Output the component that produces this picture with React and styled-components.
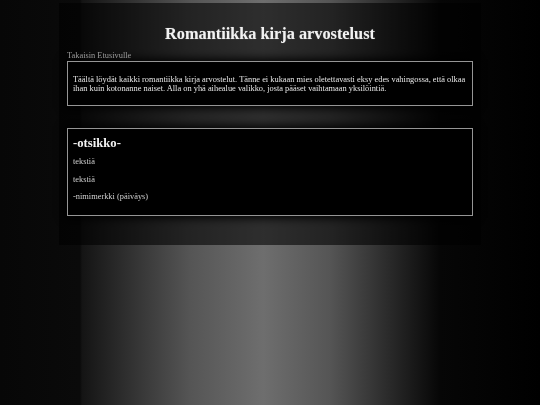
import React from "react";
import styled, { createGlobalStyle } from "styled-components";

const GlobalStyle = createGlobalStyle`
  html, body {
    margin: 0;
    padding: 0;
    min-height: 100%;
  }
  html {
    background: #000;
  }
  body {
    min-height: 405px;
    font-family: "Liberation Serif", "Times New Roman", serif;
    -webkit-font-smoothing: antialiased;
    background: linear-gradient(
      to right,
      #070707 0px,
      #0a0a0a 80px,
      #141414 82px,
      #3a3a3a 145px,
      #555555 190px,
      #6e6e6e 263px,
      #555555 330px,
      #222222 400px,
      #060606 440px,
      #000000 540px
    );
  }
`;

const Page = styled.div`
  display: flow-root;
  width: 422px;
  margin: 3px auto 0;
  padding: 0 8px 29px;
  box-sizing: border-box;
  background: rgba(0, 0, 0, 0.58);
  transform: translateZ(0);
`;

const Title = styled.h1`
  margin: 21px 0 0;
  font-size: 16.3px;
  line-height: 19px;
  font-weight: bold;
  text-align: center;
  color: #f2f2f2;
  text-shadow: 0 0 1px rgba(255, 255, 255, 0.35);
`;

const BackLink = styled.a`
  display: block;
  margin-top: 8px;
  font-size: 8.4px;
  line-height: 10px;
  color: #9a9a9a;
  text-decoration: none;
`;

const Panel = styled.section`
  background: #000;
  border: 1px solid #959595;
  padding: 5px;
  margin-top: ${(p) => p.$top || 0}px;
  box-shadow: 0 0 9px 2px #000;
`;

const Intro = styled.p`
  margin: 8px 0 7px;
  font-size: 8.4px;
  line-height: 9px;
  color: #e6e6e6;
`;

const Heading = styled.h2`
  margin: 1.5px 0 6.5px;
  font-size: 12.7px;
  line-height: 15px;
  font-weight: bold;
  color: #f4f4f4;
`;

const Line = styled.p`
  margin: 0 0 8px;
  font-size: 8.4px;
  line-height: 9.5px;
  color: #d0d0d0;
`;

export default function App() {
  return (
    <>
      <GlobalStyle />
      <Page>
        <Title>Romantiikka kirja arvostelust</Title>
        <BackLink href="#">Takaisin Etusivulle</BackLink>
        <Panel>
          <Intro>
            Täältä löydät kaikki romantiikka kirja arvostelut. Tänne ei kukaan
            mies oletettavasti eksy edes vahingossa, että olkaa ihan kuin
            kotonanne naiset. Alla on yhä aihealue valikko, josta pääset
            vaihtamaan yksilöintiä.
          </Intro>
        </Panel>
        <Panel $top={22}>
          <Heading>-otsikko-</Heading>
          <Line>tekstiä</Line>
          <Line>tekstiä</Line>
          <Line>-nimimerkki (päiväys)</Line>
        </Panel>
      </Page>
    </>
  );
}
